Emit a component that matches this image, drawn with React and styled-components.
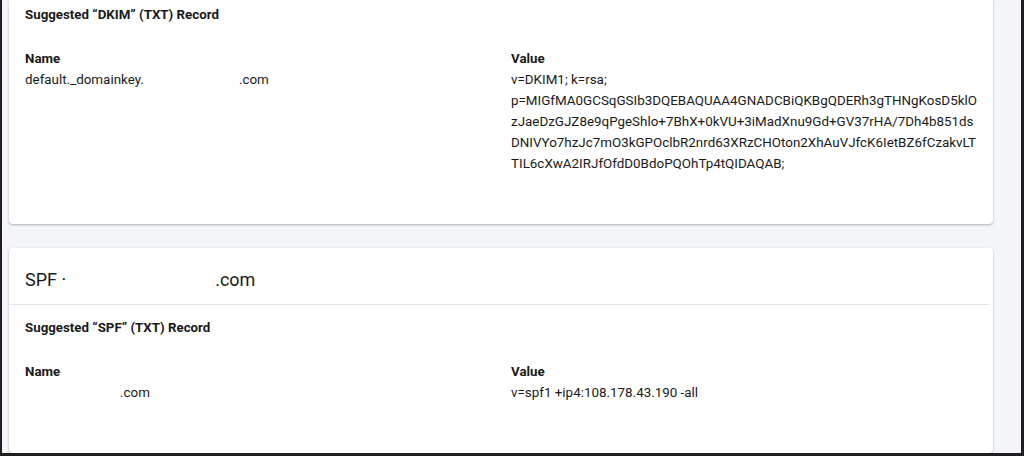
import React from "react";
import styled, { createGlobalStyle } from "styled-components";

const GlobalStyle = createGlobalStyle`
  html, body {
    margin: 0;
    padding: 0;
    background: #1c1c1c;
  }

  body {
    font-family: Roboto, "Liberation Sans", Arial, sans-serif;
    color: #1a1a1a;
    -webkit-font-smoothing: antialiased;
  }
`;

const Frame = styled.div`
  box-sizing: border-box;
  height: 456px;
  overflow: hidden;

  border-left: 2px solid #1f1f1f;
  border-right: 3px solid #1f1f1f;
  border-bottom: 3px solid #1f1f1f;
  background: #f3f5f8;
`;

const Content = styled.div`
  display: flex;
  flex-direction: column;
  gap: 24px;
  padding: 0 28px 0 7px;
`;

const Card = styled.section`
  background: #ffffff;
  border-radius: ${({ $clipped }) => ($clipped ? "0 0 4px 4px" : "4px")};
  box-shadow: 0 1px 2px rgba(60, 64, 67, 0.28), 0 1px 3px rgba(60, 64, 67, 0.12);
`;

const CardHeader = styled.h2`
  margin: 0 4px 0 0;
  padding: 20px 16px 12px 16px;
  border-bottom: 1px solid #e2e4e8;

  font-size: 18px;
  font-weight: 400;
  line-height: 24px;
  color: #1a1a1a;
`;

const RecordBlock = styled.div`
  padding: ${({ $top }) => $top}px 16px 50px 16px;
`;

const RecordTitle = styled.h3`
  margin: 0;
  font-size: 13.3px;
  font-weight: 700;
  line-height: 20px;
`;

const FieldGrid = styled.div`
  display: grid;
  grid-template-columns: 486px 1fr;
  margin-top: 23px;
`;

const Field = styled.div`
  display: flex;
  flex-direction: column;
`;

const Label = styled.span`
  font-size: 13.3px;
  font-weight: 700;
  line-height: 21px;
`;

const Text = styled.span`
  display: block;
  font-size: 13.4px;
  line-height: 21px;
  white-space: nowrap;
`;

const Redacted = styled.span`
  display: inline-block;
  width: ${({ $w }) => $w}px;
`;

const dkimValue = [
  "v=DKIM1; k=rsa;",
  "p=MIGfMA0GCSqGSIb3DQEBAQUAA4GNADCBiQKBgQDERh3gTHNgKosD5klO",
  "zJaeDzGJZ8e9qPgeShlo+7BhX+0kVU+3iMadXnu9Gd+GV37rHA/7Dh4b851ds",
  "DNIVYo7hzJc7mO3kGPOclbR2nrd63XRzCHOton2XhAuVJfcK6IetBZ6fCzakvLT",
  "TIL6cXwA2IRJfOfdD0BdoPQOhTp4tQIDAQAB;",
];

const Record = ({ title, name, value, top }) => (
  <RecordBlock $top={top}>
    <RecordTitle>{title}</RecordTitle>

    <FieldGrid>
      <Field>
        <Label>Name</Label>
        <Text>{name}</Text>
      </Field>

      <Field>
        <Label>Value</Label>
        {value.map((line) => (
          <Text key={line}>{line}</Text>
        ))}
      </Field>
    </FieldGrid>
  </RecordBlock>
);

const App = () => {
  return (
    <>
      <GlobalStyle />
      <Frame>
        <Content>
          <Card $clipped>
            <Record
              top={5}
              title="Suggested “DKIM” (TXT) Record"
              name={
                <>
                  default._domainkey.
                  <Redacted $w={95} />
                  .com
                </>
              }
              value={dkimValue}
            />
          </Card>

          <Card>
            <CardHeader>
              SPF ·<Redacted $w={149} />
              .com
            </CardHeader>
            <Record
              top={13}
              title="Suggested “SPF” (TXT) Record"
              name={
                <>
                  <Redacted $w={95} />
                  .com
                </>
              }
              value={["v=spf1 +ip4:108.178.43.190 -all"]}
            />
          </Card>
        </Content>
      </Frame>
    </>
  );
};

export default App;
